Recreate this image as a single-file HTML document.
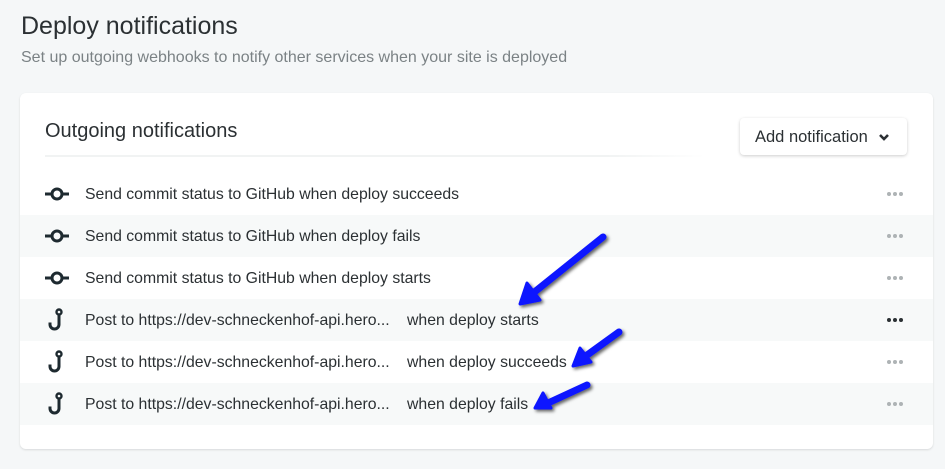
<!DOCTYPE html>
<html><head><style>
body{margin:0;width:945px;height:469px;background:#f5f7f8;font-family:"Liberation Sans",sans-serif;position:relative;overflow:hidden;color:#2b3033}
h1{position:absolute;left:21px;top:12px;margin:0;font-size:25px;font-weight:normal;color:#2b3033}
.sub{position:absolute;left:21px;top:49px;font-size:16px;color:#7b8285}
.card{position:absolute;left:20px;top:93px;width:913px;height:356px;background:#fff;border-radius:6px;box-shadow:0 1px 2px rgba(0,0,0,.12)}
.ct{position:absolute;left:25px;top:27px;font-size:20px;color:#2b3033}
.hr{position:absolute;left:25px;top:62px;width:660px;height:2px;background:linear-gradient(90deg,#f1f3f3 85%,#fff)}
.btn{position:absolute;left:720px;top:25px;width:167px;height:37px;border-radius:4px;box-shadow:0 1px 3px rgba(0,0,0,.2);background:#fff;font-size:16.5px;line-height:39px;text-indent:15px;color:#2b3033}
.row{position:absolute;left:0;width:913px;height:42px;font-size:15.8px;line-height:44px}
.row.g{background:#f7f9f9}
.row .t{position:absolute;left:65px;white-space:pre}
.row .ic{position:absolute;left:25px;top:0}
.dots{position:absolute;left:867px;top:19px}
.dots i{display:inline-block;width:4px;height:4px;border-radius:2px;background:#aeb3b5;margin-right:2px;vertical-align:top}
.dots.d i{background:#2b3033}
</style></head><body>
<h1>Deploy notifications</h1>
<div class="sub">Set up outgoing webhooks to notify other services when your site is deployed</div>
<div class="card">
<div class="ct">Outgoing notifications</div>
<div class="hr"></div>
<div class="btn">Add notification <svg width="12" height="9" viewBox="0 0 12 9" style="vertical-align:middle;margin-left:6px"><path d="M2 2l4 4 4-4" stroke="#2b3033" stroke-width="2.6" fill="none"/></svg></div>

<div class="row" style="top:80px"><svg class="ic" width="26" height="42"><path d="M0 21h6M18 21h6" stroke="#1e2a30" stroke-width="3"/><circle cx="12" cy="21" r="5" fill="none" stroke="#1e2a30" stroke-width="3"/></svg><span class="t">Send commit status to GitHub when deploy succeeds</span><div class="dots"><i></i><i></i><i></i></div></div>
<div class="row g" style="top:122px"><svg class="ic" width="26" height="42"><path d="M0 21h6M18 21h6" stroke="#1e2a30" stroke-width="3"/><circle cx="12" cy="21" r="5" fill="none" stroke="#1e2a30" stroke-width="3"/></svg><span class="t">Send commit status to GitHub when deploy fails</span><div class="dots"><i></i><i></i><i></i></div></div>
<div class="row" style="top:164px"><svg class="ic" width="26" height="42"><path d="M0 21h6M18 21h6" stroke="#1e2a30" stroke-width="3"/><circle cx="12" cy="21" r="5" fill="none" stroke="#1e2a30" stroke-width="3"/></svg><span class="t">Send commit status to GitHub when deploy starts</span><div class="dots"><i></i><i></i><i></i></div></div>
<div class="row g" style="top:206px"><svg class="ic" width="26" height="42"><circle cx="14" cy="13" r="2.5" fill="none" stroke="#1e2a30" stroke-width="2.4"/><path d="M14 15.5v10a4.5 4.5 0 0 1-9 0v-2" fill="none" stroke="#1e2a30" stroke-width="3"/></svg><span class="t">Post to https://dev-schneckenhof-api.hero...</span><span class="t" style="left:387px">when deploy starts</span><div class="dots d"><i></i><i></i><i></i></div></div>
<div class="row" style="top:248px"><svg class="ic" width="26" height="42"><circle cx="14" cy="13" r="2.5" fill="none" stroke="#1e2a30" stroke-width="2.4"/><path d="M14 15.5v10a4.5 4.5 0 0 1-9 0v-2" fill="none" stroke="#1e2a30" stroke-width="3"/></svg><span class="t">Post to https://dev-schneckenhof-api.hero...</span><span class="t" style="left:387px">when deploy succeeds</span><div class="dots"><i></i><i></i><i></i></div></div>
<div class="row g" style="top:290px"><svg class="ic" width="26" height="42"><circle cx="14" cy="13" r="2.5" fill="none" stroke="#1e2a30" stroke-width="2.4"/><path d="M14 15.5v10a4.5 4.5 0 0 1-9 0v-2" fill="none" stroke="#1e2a30" stroke-width="3"/></svg><span class="t">Post to https://dev-schneckenhof-api.hero...</span><span class="t" style="left:387px">when deploy fails</span><div class="dots"><i></i><i></i><i></i></div></div>
</div>
<svg width="945" height="469" style="position:absolute;left:0;top:0">
<defs><filter id="s"><feDropShadow dx="2" dy="2" stdDeviation="1.5" flood-color="#000" flood-opacity=".6"/></filter></defs>
<g fill="#0a14ff" stroke="#0a14ff" stroke-linecap="round" stroke-linejoin="round" filter="url(#s)">
<path d="M603 237L532 294" stroke-width="7" fill="none"/><path d="M520 304L527 283L540 300Z" stroke-width="3"/>
<path d="M619 332L583 358" stroke-width="7" fill="none"/><path d="M573 366L580 348L591 362Z" stroke-width="3"/>
<path d="M587 385L548 403" stroke-width="7" fill="none"/><path d="M535 408L543 393L551 408Z" stroke-width="3"/>
</g></svg>
</body></html>
